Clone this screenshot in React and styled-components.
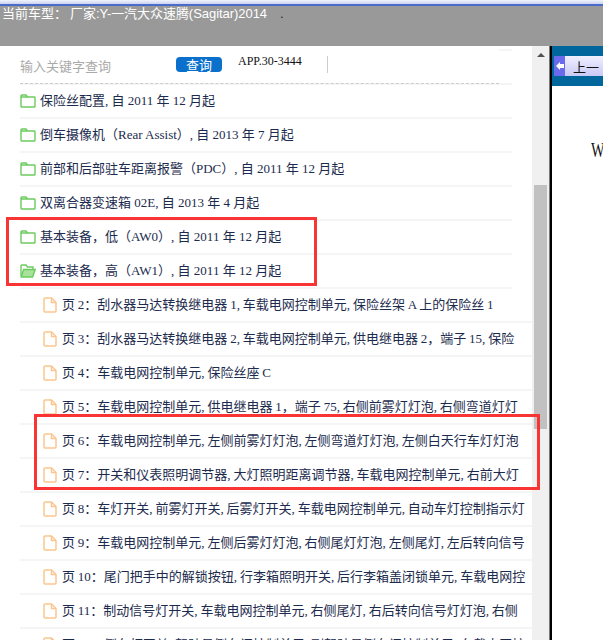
import React from 'react';
import styled, { createGlobalStyle } from 'styled-components';

const GlobalStyle = createGlobalStyle`
	html, body {
		margin: 0;
		padding: 0;
		background: #fff;
	}
`;

const Page = styled.div`
	position: relative;
	width: 603px;
	height: 640px;
	overflow: hidden;
	display: flex;
	flex-direction: column;
	font-family: 'Liberation Serif', 'Noto Sans CJK SC', serif;
`;

const TitleStrip = styled.div`
	height: 4px;
	background: linear-gradient(#f2f4fc, #c9d3f2);
	border-bottom: 2px solid #4a6cc8;
	flex: none;
`;

const Header = styled.header`
	height: 40px;
	flex: none;
	background: #999;
	color: #fff;
	display: flex;
	align-items: flex-start;
	font-family: 'Liberation Sans', 'Noto Sans CJK SC', sans-serif;
	font-size: 13px;
	line-height: 15px;
	padding-left: 2px;
	white-space: pre;
`;

const HeaderLabel = styled.span`
	width: 68px;
	flex: none;
`;

const HeaderModel = styled.span`
	letter-spacing: -0.05px;
`;

const Dot = styled.span`
	margin-left: 13px;
	color: #222;
`;

const Body = styled.div`
	flex: 1;
	display: flex;
	min-height: 0;
`;

const ListPane = styled.main`
	width: 532px;
	flex: none;
	padding-left: 20px;
	box-sizing: border-box;
	overflow: hidden;
`;

const SearchBar = styled.div`
	position: relative;
	height: 37px;
	width: 492px;
	border-bottom: 2px solid #f5f5f5;
	&::after {
		content: '';
		position: absolute;
		right: 0;
		top: 3px;
		width: 13px;
		height: 2px;
		background: #f5f5f5;
	}
`;

const SearchRow = styled.div`
	height: 38px;
	width: 479px;
	display: flex;
	align-items: flex-start;
	box-sizing: border-box;
	border-bottom: 1px dashed #ccc;
`;

const SearchHint = styled.span`
	width: 156px;
	flex: none;
	margin-top: 11px;
	font-family: 'Noto Sans CJK SC', sans-serif;
	font-size: 13px;
	line-height: 17px;
	color: #aaa;
`;

const SearchButton = styled.button`
	width: 46px;
	height: 15px;
	flex: none;
	padding: 0;
	border: 0;
	border-radius: 4px;
	margin-top: 11px;
	background: #0a70cc;
	color: #fff;
	font-family: 'Noto Sans CJK SC', sans-serif;
	font-size: 13px;
	line-height: 15px;
`;

const Code = styled.span`
	margin-left: 16px;
	margin-top: 8px;
	width: 88px;
	flex: none;
	font-size: 12px;
	line-height: 15px;
	color: #111;
`;

const VerticalRule = styled.span`
	width: 1px;
	height: 17px;
	margin-top: 10px;
	margin-left: 1px;
	background: #ccc;
`;

const Row = styled.div`
	height: 31px;
	width: 492px;
	padding-bottom: 1px;
	border-bottom: 2px solid #f5f5f5;
	padding-left: ${({ $page }) => ($page ? '23px' : '0')};
	display: flex;
	align-items: center;
	gap: ${({ $page }) => ($page ? '5px' : '4px')};
	white-space: nowrap;
	font-size: 13px;
	word-spacing: ${({ $page }) => ($page ? '-0.4px' : '0')};
	color: #1c2b4d;
`;

const RowText = styled.span`
	display: block;
	line-height: 17px;
`;

const Scrollbar = styled.div`
	width: 17px;
	flex: none;
	background: #f0f0f0;
	display: flex;
	flex-direction: column;
	align-items: center;
`;

const ScrollArrow = styled.span`
	width: 0;
	height: 0;
	margin-top: 7px;
	border-left: 4px solid transparent;
	border-right: 4px solid transparent;
	border-bottom: 4px solid #505050;
`;

const ScrollThumb = styled.div`
	width: 13px;
	height: 244px;
	margin-top: 128px;
	background: #c1c1c1;
`;

const Divider = styled.div`
	width: 3px;
	flex: none;
	background: linear-gradient(90deg, #777 0 1px, #000 1px);
`;

const DocPane = styled.aside`
	flex: 1;
	min-width: 0;
	background: #fff;
	overflow: hidden;
`;

const DocBar = styled.div`
	height: 40px;
	background: #00669b;
	padding-top: 10px;
	box-sizing: border-box;
`;

const PrevButton = styled.div`
	height: 20px;
	display: flex;
	align-items: center;
	background: linear-gradient(#f0f0ff, #c9c9f6);
	font-family: 'Noto Sans CJK SC', sans-serif;
	font-size: 13px;
	color: #111;
	margin-left: 2px;
`;

const PrevIcon = styled.span`
	width: 11px;
	height: 20px;
	flex: none;
	margin-right: 8px;
	background: #6a6aec;
	display: flex;
	align-items: center;
	justify-content: center;
`;

const DocLetter = styled.div`
	margin: 54px 0 0 39px;
	font-size: 20px;
	line-height: 20px;
	color: #111;
	transform: scaleX(0.72);
	transform-origin: left;
`;

const Highlight = styled.div`
	position: absolute;
	left: ${({ $left }) => $left}px;
	top: ${({ $top }) => $top}px;
	width: ${({ $width }) => $width}px;
	height: ${({ $height }) => $height}px;
	border: 3px solid #f83434;
	box-sizing: border-box;
	pointer-events: none;
`;

const ClosedFolder = () => (
	<svg width="16" height="14" viewBox="0 0 16 14" fill="none" stroke="#6ccb5f" strokeWidth="1.4">
		<path d="M1 3V12.2Q1 13 1.8 13H14.2Q15 13 15 12.2V3.6Q15 3 14.2 3H1ZM1 3V1.8Q1 1 1.8 1H6L7.5 3" />
	</svg>
);

const OpenFolder = () => (
	<svg width="16" height="14" viewBox="0 0 16 14" fill="none" stroke="#6ccb5f" strokeWidth="1.4">
		<path d="M1 12V1.8Q1 1 1.8 1H6L7.5 3H13V5.5" />
		<path d="M1.2 13H12.6L15.2 5.5H3.6L1.2 13Z" fill="#a6e29a" />
	</svg>
);

const PageIcon = () => (
	<svg width="14" height="16" viewBox="0 0 14 16" fill="none" stroke="#fbc68e" strokeWidth="1.5">
		<path d="M1 2Q1 1 2 1H8.5L13 5.5V14Q13 15 12 15H2Q1 15 1 14V2Z" />
		<path d="M8.5 1V5.5H13" />
	</svg>
);

const rows = [
	{ kind: 'folder', text: '保险丝配置, 自 2011 年 12 月起' },
	{ kind: 'folder', text: '倒车摄像机（Rear Assist）, 自 2013 年 7 月起' },
	{ kind: 'folder', text: '前部和后部驻车距离报警（PDC）, 自 2011 年 12 月起' },
	{ kind: 'folder', text: '双离合器变速箱 02E, 自 2013 年 4 月起' },
	{ kind: 'folder', text: '基本装备，低（AW0）, 自 2011 年 12 月起' },
	{ kind: 'open', text: '基本装备，高（AW1）, 自 2011 年 12 月起' },
	{ kind: 'page', text: '页 2：刮水器马达转换继电器 1, 车载电网控制单元, 保险丝架 A 上的保险丝 1' },
	{ kind: 'page', text: '页 3：刮水器马达转换继电器 2, 车载电网控制单元, 供电继电器 2，端子 15, 保险' },
	{ kind: 'page', text: '页 4：车载电网控制单元, 保险丝座 C' },
	{ kind: 'page', text: '页 5：车载电网控制单元, 供电继电器 1，端子 75, 右侧前雾灯灯泡, 右侧弯道灯灯' },
	{ kind: 'page', text: '页 6：车载电网控制单元, 左侧前雾灯灯泡, 左侧弯道灯灯泡, 左侧白天行车灯灯泡' },
	{ kind: 'page', text: '页 7：开关和仪表照明调节器, 大灯照明距离调节器, 车载电网控制单元, 右前大灯' },
	{ kind: 'page', text: '页 8：车灯开关, 前雾灯开关, 后雾灯开关, 车载电网控制单元, 自动车灯控制指示灯' },
	{ kind: 'page', text: '页 9：车载电网控制单元, 左侧后雾灯灯泡, 右侧尾灯灯泡, 左侧尾灯, 左后转向信号' },
	{ kind: 'page', text: '页 10：尾门把手中的解锁按钮, 行李箱照明开关, 后行李箱盖闭锁单元, 车载电网控' },
	{ kind: 'page', text: '页 11：制动信号灯开关, 车载电网控制单元, 右侧尾灯, 右后转向信号灯灯泡, 右侧' },
	{ kind: 'page', text: '页 12：倒车灯开关, 驾驶员侧车门控制单元, 副驾驶员侧车门控制单元, 车载电网控' },
];

const icons = { folder: ClosedFolder, open: OpenFolder, page: PageIcon };

const App = () => (
	<Page>
		<GlobalStyle />
		<TitleStrip />
		<Header>
			<HeaderLabel>当前车型：</HeaderLabel>
			<HeaderModel>厂家:Y-一汽大众速腾(Sagitar)2014</HeaderModel>
			<Dot>.</Dot>
		</Header>
		<Body>
			<ListPane>
				<SearchBar>
					<SearchRow>
						<SearchHint>输入关键字查询</SearchHint>
						<SearchButton type="button">查询</SearchButton>
						<Code>APP.30-3444</Code>
						<VerticalRule />
					</SearchRow>
				</SearchBar>
				{rows.map(({ kind, text }) => {
					const Icon = icons[kind];
					return (
						<Row key={text} $page={kind === 'page'}>
							<Icon />
							<RowText>{text}</RowText>
						</Row>
					);
				})}
			</ListPane>
			<Scrollbar>
				<ScrollArrow />
				<ScrollThumb />
			</Scrollbar>
			<Divider />
			<DocPane>
				<DocBar>
					<PrevButton>
						<PrevIcon>
							<svg width="8" height="8" viewBox="0 0 8 8" fill="#fff">
								<path d="M0 4L4 0V2H8V6H4V8Z" />
							</svg>
						</PrevIcon>
						上一
					</PrevButton>
				</DocBar>
				<DocLetter>W</DocLetter>
			</DocPane>
		</Body>
		<Highlight $left={6} $top={217} $width={311} $height={69} />
		<Highlight $left={34} $top={414} $width={506} $height={76} />
	</Page>
);

export default App;
